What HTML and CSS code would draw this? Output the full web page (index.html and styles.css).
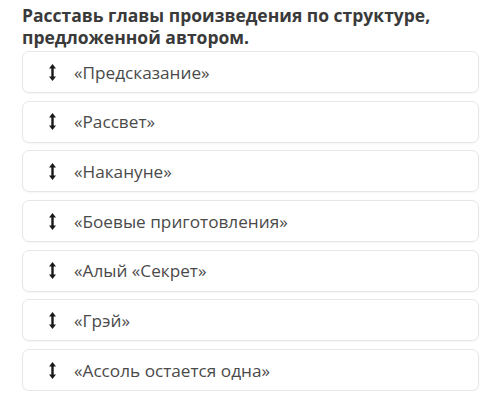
FILE: index.html
```html
<!DOCTYPE html>
<html lang="ru">
<head>
  <meta charset="UTF-8">
  <meta name="viewport" content="width=device-width, initial-scale=1.0">
  <title>Порядок глав</title>
  <link rel="stylesheet" href="styles.css">
</head>
<body>
  <div class="task">
    <h1 class="task-title">Расставь главы произведения по структуре, предложенной автором.</h1>
    <ul class="order-list">
      <li class="order-item">
        <svg class="drag-icon" viewBox="0 0 7 17"><path d="M3.5 0 L7 4.5 H4.7 V12.5 H7 L3.5 17 L0 12.5 H2.3 V4.5 H0 Z"/></svg>
        <span>«Предсказание»</span>
      </li>
      <li class="order-item">
        <svg class="drag-icon" viewBox="0 0 7 17"><path d="M3.5 0 L7 4.5 H4.7 V12.5 H7 L3.5 17 L0 12.5 H2.3 V4.5 H0 Z"/></svg>
        <span>«Рассвет»</span>
      </li>
      <li class="order-item">
        <svg class="drag-icon" viewBox="0 0 7 17"><path d="M3.5 0 L7 4.5 H4.7 V12.5 H7 L3.5 17 L0 12.5 H2.3 V4.5 H0 Z"/></svg>
        <span>«Накануне»</span>
      </li>
      <li class="order-item">
        <svg class="drag-icon" viewBox="0 0 7 17"><path d="M3.5 0 L7 4.5 H4.7 V12.5 H7 L3.5 17 L0 12.5 H2.3 V4.5 H0 Z"/></svg>
        <span>«Боевые приготовления»</span>
      </li>
      <li class="order-item">
        <svg class="drag-icon" viewBox="0 0 7 17"><path d="M3.5 0 L7 4.5 H4.7 V12.5 H7 L3.5 17 L0 12.5 H2.3 V4.5 H0 Z"/></svg>
        <span>«Алый «Секрет»</span>
      </li>
      <li class="order-item">
        <svg class="drag-icon" viewBox="0 0 7 17"><path d="M3.5 0 L7 4.5 H4.7 V12.5 H7 L3.5 17 L0 12.5 H2.3 V4.5 H0 Z"/></svg>
        <span>«Грэй»</span>
      </li>
      <li class="order-item">
        <svg class="drag-icon" viewBox="0 0 7 17"><path d="M3.5 0 L7 4.5 H4.7 V12.5 H7 L3.5 17 L0 12.5 H2.3 V4.5 H0 Z"/></svg>
        <span>«Ассоль остается одна»</span>
      </li>
    </ul>
  </div>
</body>
</html>
```

FILE: styles.css
```css
body {
  margin: 0;
  font-family: 'Open Sans', sans-serif;
  background-color: #fff;
  color: #4a4a4a;
}
.task {
  padding: 4px 21px 0 22px;
}
.task-title {
  margin: 0 0 3px 0;
  font-size: 17.5px;
  font-weight: 700;
  line-height: 22px;
  color: #3a3a3a;
}
.order-list {
  list-style: none;
  margin: 0;
  padding: 0;
  display: flex;
  flex-direction: column;
  gap: 7.7px;
}
.order-item {
  display: flex;
  align-items: center;
  height: 40px;
  border: 1px solid #e6e6e6;
  border-radius: 7px;
  box-shadow: 0 1px 2px rgba(0, 0, 0, 0.04);
  font-size: 17.2px;
}
.drag-icon {
  width: 7px;
  height: 17px;
  margin: 0 18px 0 26px;
  fill: #1a1a1a;
}
```
